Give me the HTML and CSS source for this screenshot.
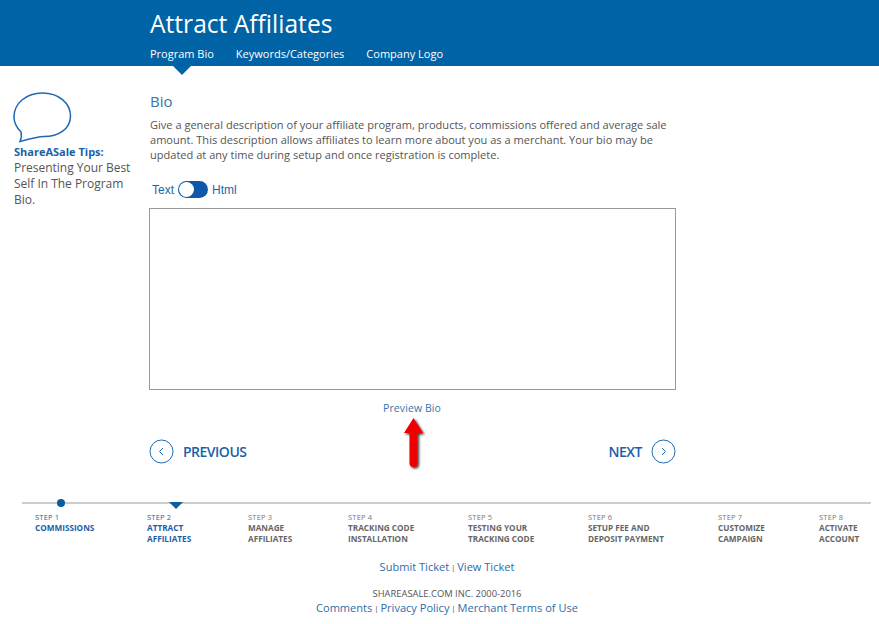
FILE: index.html
```html
<!DOCTYPE html>
<html lang="en">
<head>
<meta charset="utf-8">
<title>Attract Affiliates</title>
<link rel="stylesheet" href="styles.css">
</head>
<body>
<header class="banner">
  <h1 class="banner-title">Attract Affiliates</h1>
  <nav class="tabs">
    <a class="tab tab-active">Program Bio</a>
    <a class="tab">Keywords/Categories</a>
    <a class="tab">Company Logo</a>
  </nav>
</header>
<main class="content">
  <aside class="tips">
    <svg class="bubble" width="60" height="52" viewBox="0 0 60 52">
      <path d="M8 41C3.500 36.500 1 31.500 1 26C1 12 13.500 2 29.500 2C45.500 2 57.500 12 57.500 25C57.500 38 45.500 45.500 31 45.500C25.500 45.500 18 47.500 7 50.500C8.500 47 8.800 44 8 41Z" fill="#fff" stroke="#1f69b1" stroke-width="1.500"/>
    </svg>
    <p class="tips-title">ShareASale Tips:</p>
    <p class="tips-text">Presenting Your Best Self In The Program Bio.</p>
  </aside>
  <section class="main">
    <h2 class="section-title">Bio</h2>
    <p class="intro">Give a general description of your affiliate program, products, commissions offered and average sale amount. This description allows affiliates to learn more about you as a merchant. Your bio may be updated at any time during setup and once registration is complete.</p>
    <div class="toggle-row">
      <span>Text</span>
      <span class="toggle"><span class="knob"></span></span>
      <span>Html</span>
    </div>
    <textarea class="bio-box"></textarea>
    <div class="preview"><a>Preview Bio</a>
      <svg class="arrow" width="28" height="58" viewBox="0 0 28 58">
        <defs><filter id="s" x="-30%" y="-15%" width="170%" height="135%"><feDropShadow dx="1.500" dy="1.500" stdDeviation="1" flood-color="#000" flood-opacity=".8"/></filter></defs>
        <path d="M13.500 4L23 19H17.500V49Q17.500 53 13.500 53Q9.500 53 9.500 49V19H4Z" fill="#ee0000" filter="url(#s)"/>
      </svg>
    </div>
    <div class="pager">
      <a class="pager-link">
        <svg width="25" height="25" viewBox="0 0 25 25"><circle cx="12.500" cy="12.500" r="11.500" fill="none" stroke="#1f69b1" stroke-width="1"/><path d="M14 9L10.500 12.500L14 16" fill="none" stroke="#1f69b1"/></svg>
        PREVIOUS
      </a>
      <a class="pager-link">
        NEXT
        <svg width="25" height="25" viewBox="0 0 25 25"><circle cx="12.500" cy="12.500" r="11.500" fill="none" stroke="#1f69b1" stroke-width="1"/><path d="M11 9L14.500 12.500L11 16" fill="none" stroke="#1f69b1"/></svg>
      </a>
    </div>
  </section>
</main>
<section class="progress">
  <span class="dot"></span>
  <span class="current"></span>
  <ol class="steps">
    <li class="step step-1 done"><small>STEP 1</small><b>COMMISSIONS</b></li>
    <li class="step step-2 done"><small>STEP 2</small><b>ATTRACT<br>AFFILIATES</b></li>
    <li class="step step-3"><small>STEP 3</small><b>MANAGE<br>AFFILIATES</b></li>
    <li class="step step-4"><small>STEP 4</small><b>TRACKING CODE<br>INSTALLATION</b></li>
    <li class="step step-5"><small>STEP 5</small><b>TESTING YOUR<br>TRACKING CODE</b></li>
    <li class="step step-6"><small>STEP 6</small><b>SETUP FEE AND<br>DEPOSIT PAYMENT</b></li>
    <li class="step step-7"><small>STEP 7</small><b>CUSTOMIZE<br>CAMPAIGN</b></li>
    <li class="step step-8"><small>STEP 8</small><b>ACTIVATE<br>ACCOUNT</b></li>
  </ol>
</section>
<footer class="footer">
  <p class="tickets"><a>Submit Ticket</a> <i>|</i> <a>View Ticket</a></p>
  <p class="copy">SHAREASALE.COM INC. 2000-2016</p>
  <p class="links"><a>Comments</a> <i>|</i> <a>Privacy Policy</a> <i>|</i> <a>Merchant Terms of Use</a></p>
</footer>
</body>
</html>
```
FILE: styles.css
```css
* { box-sizing: border-box; }
html, body { margin: 0; padding: 0; }
body { width: 879px; height: 624px; overflow: hidden; background: #fff; font-family: "Open Sans", sans-serif; color: #555; }
p, h1, h2, ol { margin: 0; padding: 0; }
.banner { height: 66px; background: #0063a5; padding-left: 150px; color: #fff; position: relative; }
.banner-title { font-size: 24.600px; font-weight: 400; line-height: 34px; padding-top: 7px; height: 41px; }
.tabs { display: flex; gap: 22px; margin-top: 5px; font-size: 11px; line-height: 16px; }
.tab { display: block; }
.tab-active { position: relative; }
.tab-active::after { content: ""; position: absolute; left: 23px; top: 20px; border-left: 9px solid transparent; border-right: 9px solid transparent; border-top: 9px solid #0063a5; }
.content { display: flex; height: 436px; }
.tips { width: 150px; padding: 25px 0 0 14px; font-size: 12px; line-height: 16px; }
.bubble { display: block; margin-left: -1px; }
.tips-title { color: #1b5fa8; font-weight: 700; margin-top: 1px; font-size: 11px; }
.tips-text { width: 118px; letter-spacing: -.02px; }
.main { width: 526px; }
.section-title { font-size: 15px; font-weight: 400; color: #3a74a8; line-height: 20px; margin-top: 25px; }
.intro { font-size: 11.050px; line-height: 15px; margin-top: 6px; }
.toggle-row { display: flex; align-items: center; gap: 3px; margin: 18.500px 0 0 2px; height: 18px; font-family: "Liberation Sans", sans-serif; font-size: 12px; color: #1b6aa8; }
.toggle { width: 30px; height: 17px; border-radius: 9px; background: #0f57a8; position: relative; display: block; margin: 0 1px; }
.knob { position: absolute; left: 1px; top: 1px; width: 15px; height: 15px; border-radius: 50%; background: #fff; }
.bio-box { display: block; width: 527px; height: 182px; margin: 9px 0 0 -1px; border: 1px solid #999; background: #fff; resize: none; padding: 0; }
.preview { text-align: center; font-size: 10.500px; line-height: 14px; color: #3a74a8; margin: 11px 0 0 -2px; height: 16px; position: relative; letter-spacing: .1px; }
.arrow { position: absolute; left: 252px; top: 13px; }
.pager { display: flex; justify-content: space-between; width: 527px; margin: 22px 0 0 -1px; height: 25px; }
.pager-link { display: flex; align-items: center; gap: 9px; font-size: 14px; font-weight: 600; color: #1b5fa8; letter-spacing: -.5px; }
.progress { position: relative; margin: 0 8px 0 22px; height: 56px; padding-top: 10px; }
.progress::before { content: ""; position: absolute; left: 0; right: 0; top: 0; height: 2px; background: #ccc; }
.dot { position: absolute; left: 35px; top: -3px; width: 8px; height: 8px; border-radius: 50%; background: #0c5c9f; }
.current { position: absolute; left: 147px; top: 0; width: 0; height: 0; border-left: 7px solid transparent; border-right: 7px solid transparent; border-top: 7px solid #0c5c9f; }
.steps { list-style: none; position: relative; height: 38px; }
.step { position: absolute; top: 0; font-size: 8px; color: #666; white-space: nowrap; }
.step small { display: block; font-size: 7.500px; line-height: 10px; letter-spacing: .2px; color: #777; }
.step b { display: block; font-size: 8.200px; line-height: 11px; font-weight: 700; }
.done small, .done b { color: #1b5fa8; }
.step-1 { left: 13px; }
.step-2 { left: 125px; }
.step-3 { left: 226px; }
.step-4 { left: 326px; }
.step-5 { left: 446px; }
.step-6 { left: 566px; }
.step-7 { left: 696px; }
.step-8 { left: 797px; }
.footer { text-align: center; color: #555; padding-left: 15px; }
.footer a { color: #2d6ca8; }
.footer i { font-style: normal; font-size: 8px; margin: 0 -1px; vertical-align: 1px; }
.tickets { font-size: 11.050px; line-height: 16px; margin-top: 1px; }
.copy { font-size: 9.400px; line-height: 14px; margin-top: 12px; }
.links { font-size: 11.050px; line-height: 16px; margin-top: -1px; }
```
